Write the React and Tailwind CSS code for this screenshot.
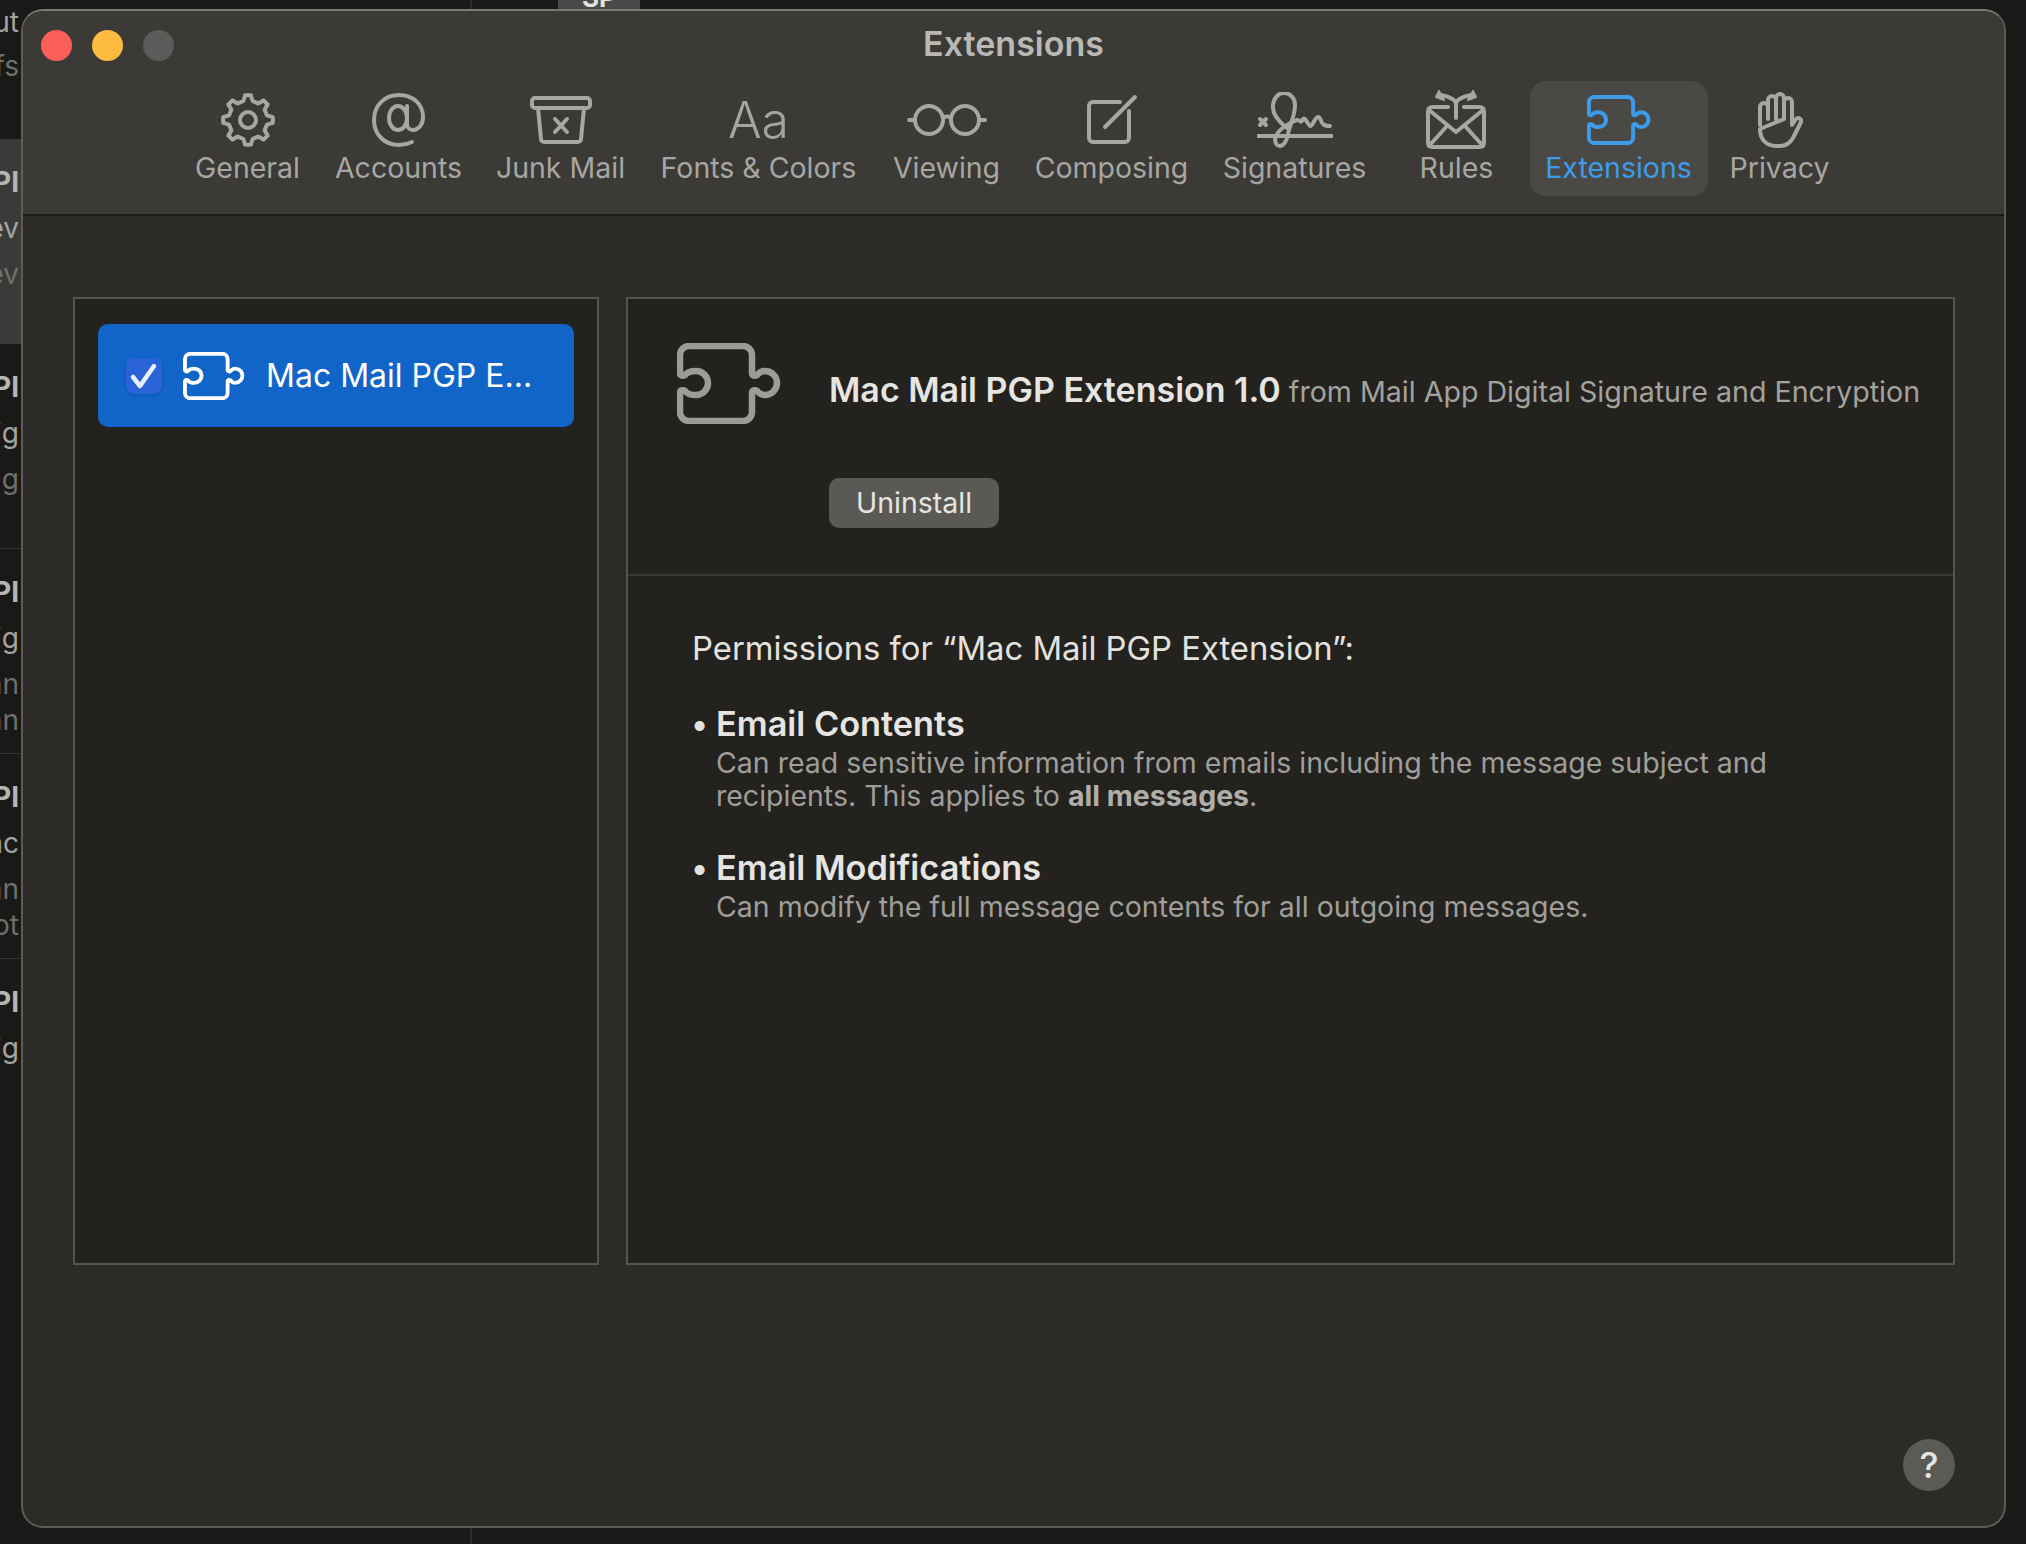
const gearPath = (() => {
  const pts = [];
  const teeth = 8;
  for (let i = 0; i < teeth; i++) {
    const a = (i / teeth) * Math.PI * 2 - Math.PI / 2;
    const step = (Math.PI * 2) / teeth;
    [[-0.3, 19.5], [-0.15, 25], [0.15, 25], [0.3, 19.5]].forEach(([o, r]) => {
      pts.push([27 + r * Math.cos(a + o * step), 27 + r * Math.sin(a + o * step)]);
    });
  }
  return 'M' + pts.map((p) => p[0].toFixed(1) + ' ' + p[1].toFixed(1)).join('L') + 'Z';
})();

function Puzzle({ className }) {
  return (
    <svg viewBox="0 0 104 81" fill="none" stroke="currentColor" strokeWidth="6.5" strokeLinejoin="round" className={className}>
      <path d="M12 3H66a9 9 0 0 1 9 9V30C75 33 79 34 81 31C83 29 85 28 88 28A12 12 0 0 1 88 52C85 52 83 51 81 49C79 46 75 47 75 50V69a9 9 0 0 1-9 9H12a9 9 0 0 1-9-9V50C3 47 7 46 9 49C11 51 14 52 19 52A12 12 0 0 0 19 28C14 28 11 29 9 31C7 34 3 33 3 30V12a9 9 0 0 1 9-9Z" />
    </svg>
  );
}

function Stroke({ w, h, children }) {
  return (
    <svg width={w} height={h} viewBox={`0 0 ${w} ${h}`} fill="none" stroke="currentColor" strokeWidth="4" strokeLinecap="round" strokeLinejoin="round">
      {children}
    </svg>
  );
}

const tabs = [
  {
    label: 'General',
    w: 'w-[140px]',
    icon: (
      <Stroke w={54} h={54}>
        <path d={gearPath} />
        <circle cx="27" cy="27" r="8" />
      </Stroke>
    ),
  },
  {
    label: 'Accounts',
    w: 'w-[162px]',
    icon: (
      <Stroke w={54} h={54}>
        <ellipse cx="26" cy="25" rx="9" ry="12" />
        <path d="M35 13V31c0 4 3 6 6 6 6 0 10-6 10-13C51 11 41 2 27 2 13 2 2 12 2 27c0 14 10 25 25 25 5 0 9-1 13-3" />
      </Stroke>
    ),
  },
  {
    label: 'Junk Mail',
    w: 'w-[162px]',
    icon: (
      <Stroke w={62} h={48}>
        <rect x="2" y="2" width="58" height="10" rx="3" />
        <path d="M8 12 11 43a3 3 0 0 0 3 3H48a3 3 0 0 0 3-3L54 12" />
        <path d="M25 23 37 36M37 23 25 36" />
      </Stroke>
    ),
  },
  {
    label: 'Fonts & Colors',
    w: 'w-[234px]',
    icon: <span className="text-[50px] leading-[64px] font-light text-[#a5a4a0]">Aa</span>,
  },
  {
    label: 'Viewing',
    w: 'w-[142px]',
    icon: (
      <Stroke w={80} h={34}>
        <circle cx="22" cy="17" r="14" />
        <circle cx="58" cy="17" r="14" />
        <path d="M36 15c2-2 6-2 8 0M2 17H8M72 17H78" />
      </Stroke>
    ),
  },
  {
    label: 'Composing',
    w: 'w-[188px]',
    icon: (
      <Stroke w={52} h={52}>
        <path d="M34 8H7a4 4 0 0 0-4 4V44a4 4 0 0 0 4 4H39a4 4 0 0 0 4-4V17" />
        <path d="M49 3 19 33" />
      </Stroke>
    ),
  },
  {
    label: 'Signatures',
    w: 'w-[178px]',
    icon: (
      <Stroke w={76} h={56}>
        <path d="M1 44H75" />
        <path d="M3 27 9 33M9 27 3 33" />
        <path d="M30 36C22 30 15 22 16 13 17 5 22 1 27 1 33 1 38 6 38 13 38 24 33 32 31 42 30 48 27 54 23 54 19 54 17 49 19 44 22 37 30 32 40 28 43 27 43 33 46 27 48 24 51 33 53 34 56 34 58 25 61 25 64 25 64 31 66 32 68 34 71 34 73 34" />
      </Stroke>
    ),
  },
  {
    label: 'Rules',
    w: 'w-[146px]',
    icon: (
      <Stroke w={62} h={60}>
        <path d="M22 17H6a4 4 0 0 0-4 4V53a4 4 0 0 0 4 4H54a4 4 0 0 0 4-4V21a4 4 0 0 0-4-4H38" />
        <path d="M3 20 30 42 57 20M3 56 21 36M57 56 39 36" />
        <path d="M30 28V14C30 10 24 7 15 5M30 14C30 10 36 7 45 5" />
        <path d="M13 1 18 10 10 7ZM47 1 42 10 50 7Z" fill="currentColor" strokeWidth="2" />
      </Stroke>
    ),
  },
  {
    label: 'Extensions',
    w: 'w-[178px]',
    active: true,
    icon: <Puzzle className="w-[64px] h-[50px]" />,
  },
  {
    label: 'Privacy',
    w: 'w-[144px]',
    icon: (
      <Stroke w={46} h={56}>
        <path d="M3 33V15a4 4 0 0 1 8 0V27M11 27V8a4 4 0 0 1 8 0V27M19 27V6a4 4 0 0 1 8 0V27M27 27V10a4 4 0 0 1 8 0V33L39 27a3 3 0 0 1 5 3L36 46C33 51 29 54 23 54H19C9 54 3 47 3 37Z" />
      </Stroke>
    ),
  },
];

const sideRows = [
  { active: true, lines: ['PI', 'ev', 'ev'] },
  { lines: ['PI', 'ig', 'ig'] },
  { lines: ['PI', 'ig', 'an', 'an'] },
  { lines: ['PI', 'nc', 'an', 'ot'] },
  { last: true, lines: ['PI', 'ig'] },
];

function Backdrop() {
  return (
    <div className="w-[21px] shrink-0 overflow-hidden text-[28px]">
      <div className="h-[139px] pr-[2px] text-[#a3a3a0] leading-[44px]">
        <div className="flex justify-end">ut</div>
        <div className="flex justify-end text-[#6f6f6c]">fs</div>
      </div>
      {sideRows.map((row, i) => (
        <div
          key={i}
          className={`h-[205px] pt-[20px] pr-[2px] ${row.active ? 'bg-[#3a3a39]' : row.last ? '' : 'border-b border-[#333331]'}`}
        >
          {row.lines.map((t, j) => (
            <div
              key={j}
              className={
                j === 0
                  ? 'flex justify-end leading-[46px] font-bold text-[#b5b5b2]'
                  : j === 1
                    ? 'flex justify-end leading-[46px] text-[#a3a3a0]'
                    : j === 2
                      ? 'flex justify-end leading-[46px] text-[#6f6f6c]'
                      : 'flex justify-end leading-[26px] text-[#6f6f6c]'
              }
            >
              {t}
            </div>
          ))}
        </div>
      ))}
    </div>
  );
}

export default function App() {
  return (
    <div className="relative flex w-[2026px] h-[1544px] overflow-hidden bg-[#191917] font-['Inter',sans-serif]">
      {/* bits of the app behind the window */}
      <div className="absolute left-[470px] top-0 w-[2px] h-full bg-[#2c2c2a]" />
      <div className="absolute left-[558px] top-0 w-[82px] h-[9px] overflow-hidden bg-[#4a4a49] text-center text-[26px] leading-[10px] font-bold text-[#e0e0de]">
        <span className="relative top-[-7px]">SP</span>
      </div>
      <Backdrop />

      <div className="relative flex-1 pt-[9px] pr-[20px]">
        <div className="flex flex-col h-[1519px] rounded-[22px] overflow-hidden border-2 border-[#5c5b58] border-t-[#7a7976] bg-[#2c2b28]">
          <div className="shrink-0 h-[205px] bg-[#3b3a37] border-b-2 border-[#1b1a18]">
            <div className="grid grid-cols-[1fr_auto_1fr] items-center h-[64px]">
              <div className="flex gap-[20px] pl-[18px] mt-[4px]">
                <span className="w-[31px] h-[31px] rounded-full bg-[#fb5f57]" />
                <span className="w-[31px] h-[31px] rounded-full bg-[#fdbb40]" />
                <span className="w-[31px] h-[31px] rounded-full bg-[#5c5b59]" />
              </div>
              <div className="text-[34px] font-semibold text-[#b9b8b4]">Extensions</div>
              <div />
            </div>
            <div className="flex justify-center pl-[2px] pt-[6px]">
              {tabs.map((t) => (
                <div
                  key={t.label}
                  className={`${t.w} h-[115px] flex flex-col items-center pt-[7px] rounded-[16px] ${t.active ? 'bg-[#4a4946] text-[#3d9ce9]' : 'text-[#a7a6a2]'}`}
                >
                  <div className="h-[63px] flex items-center justify-center">{t.icon}</div>
                  <div className="text-[28.5px] leading-[34px] whitespace-nowrap">{t.label}</div>
                </div>
              ))}
            </div>
          </div>

          <div className="flex-1 pt-[81px] pl-[50px] pr-[49px]">
            <div className="flex gap-[27px] h-[968px]">
              <div className="w-[526px] shrink-0 bg-[#23221f] border-2 border-[#555450] pt-[25px] px-[23px]">
                <div className="flex items-center h-[103px] pl-[28px] gap-[21px] rounded-[10px] bg-[#1165c8] text-white">
                  <span className="w-[36px] h-[36px] rounded-[8px] bg-[#2a63d8] shadow-sm">
                    <svg width="36" height="36" viewBox="0 0 36 36" fill="none" stroke="#e8eefc" strokeWidth="4.5" strokeLinecap="round" strokeLinejoin="round">
                      <path d="M7 19 14 28 28 8" />
                    </svg>
                  </span>
                  <Puzzle className="w-[62px] h-[48px]" />
                  <span className="text-[32px] whitespace-nowrap">Mac Mail PGP E...</span>
                </div>
              </div>

              <div className="flex-1 bg-[#23221f] border-2 border-[#555450]">
                <div className="flex h-[277px] border-b-2 border-[#3b3a37] pl-[49px] pt-[44px] gap-[48px]">
                  <Puzzle className="w-[104px] h-[81px] shrink-0 text-[#9c9b97]" />
                  <div>
                    <div className="flex items-baseline gap-[8px] mt-[21px] whitespace-nowrap">
                      <span className="text-[34px] font-semibold text-[#e6e5e1]">Mac Mail PGP Extension 1.0</span>
                      <span className="text-[28.6px] text-[#a3a29e]">from Mail App Digital Signature and Encryption</span>
                    </div>
                    <button className="block mt-[63px] w-[170px] h-[50px] rounded-[10px] bg-[#5a5955] text-[28.5px] text-[#e6e5e1]">
                      Uninstall
                    </button>
                  </div>
                </div>

                <div className="pl-[64px] pt-[50px]">
                  <div className="text-[32.8px] leading-[44px] text-[#e3e2de]">Permissions for “Mac Mail PGP Extension”:</div>
                  <div className="flex mt-[32px]">
                    <span className="w-[24px] text-[32px] leading-[44px] font-bold text-[#e3e2de]">•</span>
                    <div>
                      <div className="text-[34.3px] leading-[44px] font-semibold text-[#e6e5e1]">Email Contents</div>
                      <div className="text-[28.5px] leading-[33px] text-[#9f9e9a]">
                        Can read sensitive information from emails including the message subject and
                        <br />
                        recipients. This applies to <b className="font-bold text-[#afaeaa]">all messages</b>.
                      </div>
                    </div>
                  </div>
                  <div className="flex mt-[34px]">
                    <span className="w-[24px] text-[32px] leading-[44px] font-bold text-[#e3e2de]">•</span>
                    <div>
                      <div className="text-[34.3px] leading-[44px] font-semibold text-[#e6e5e1]">Email Modifications</div>
                      <div className="text-[28.5px] leading-[33px] text-[#9f9e9a]">
                        Can modify the full message contents for all outgoing messages.
                      </div>
                    </div>
                  </div>
                </div>
              </div>
            </div>

            <div className="flex justify-end mt-[174px]">
              <button className="w-[52px] h-[52px] rounded-full bg-[#5b5a57] text-[36px] leading-[52px] font-medium text-[#e5e5e3]">?</button>
            </div>
          </div>
        </div>
      </div>
    </div>
  );
}
